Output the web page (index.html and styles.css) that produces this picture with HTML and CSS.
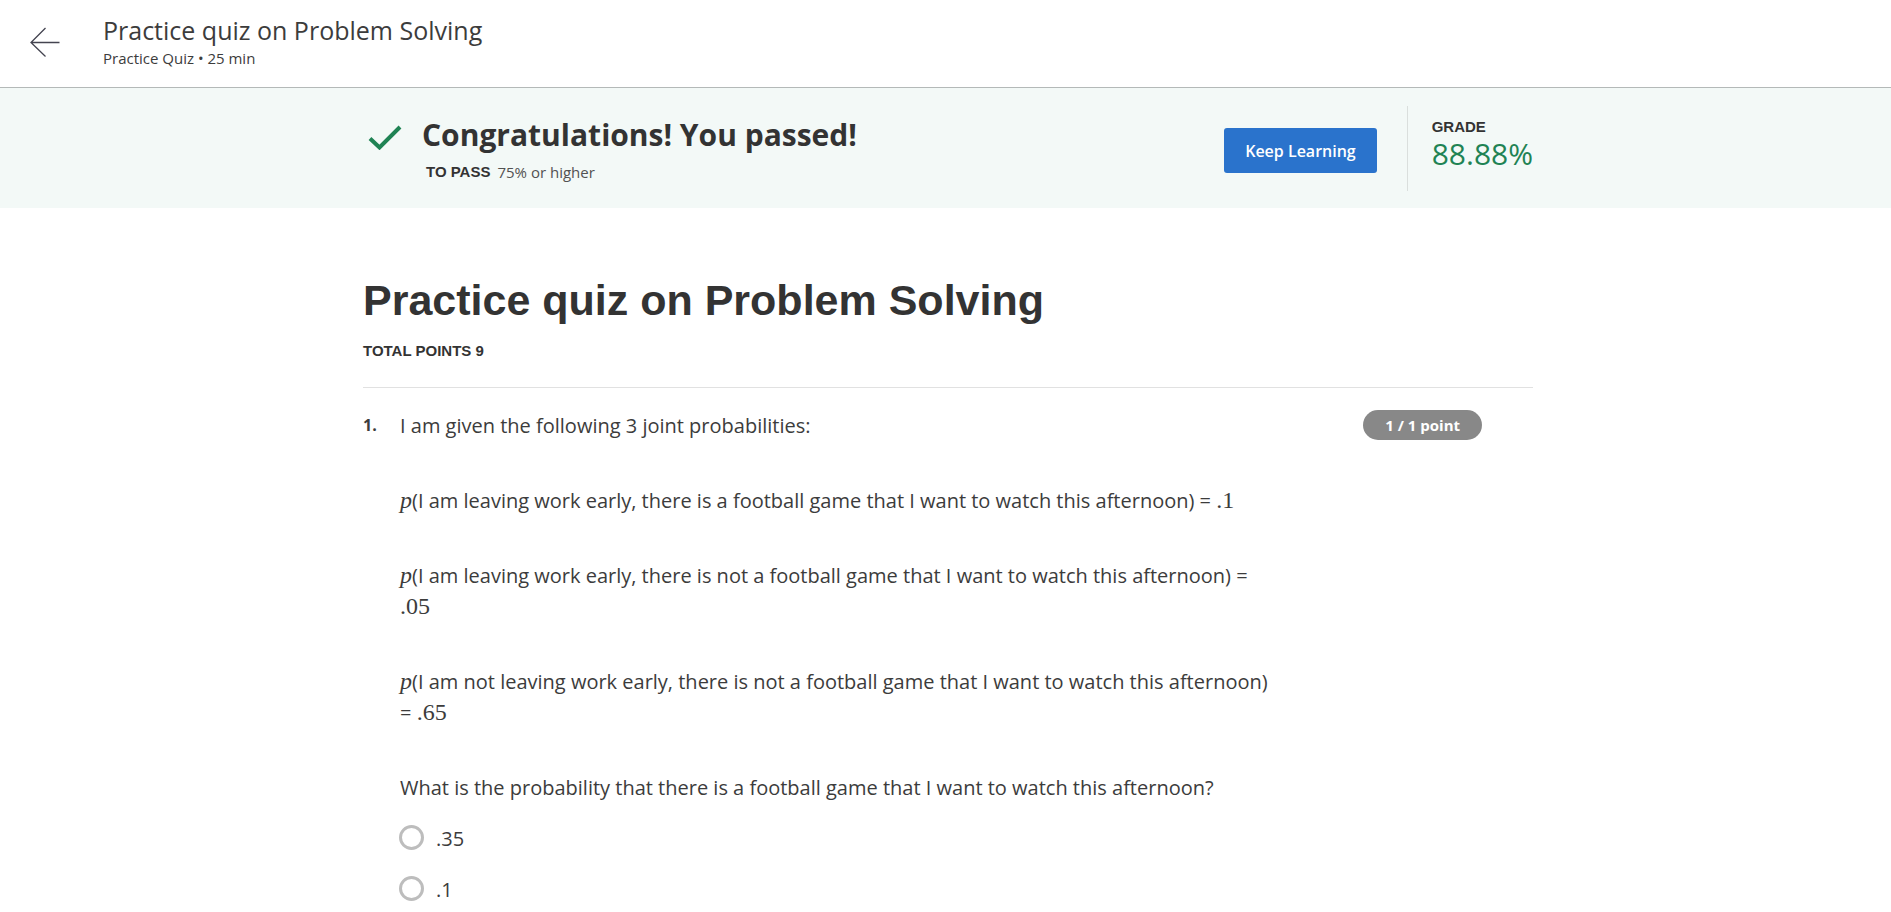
FILE: index.html
```html
<!DOCTYPE html>
<html lang="en">
<head>
<meta charset="utf-8">
<meta name="viewport" content="width=device-width, initial-scale=1">
<title>Practice quiz on Problem Solving</title>
<link rel="stylesheet" href="styles.css">
</head>
<body>
<header class="topbar">
  <button class="back" type="button" aria-label="Back">
    <svg class="back-icon" viewBox="0 0 30 30" aria-hidden="true"><path d="M29.5 15.500H1M15.500 1 1 15.500 15.500 29.500"/></svg>
  </button>
  <div>
    <p class="topbar-title">Practice quiz on Problem Solving</p>
    <p class="topbar-sub">Practice Quiz • 25 min</p>
  </div>
</header>
<section class="banner">
  <div class="container banner-inner">
    <svg class="check" viewBox="0 0 34 26" aria-hidden="true"><path d="M2 14.500 11.500 23.500 32 3"/></svg>
    <div class="result">
      <h2 class="result-title">Congratulations! You passed!</h2>
      <p class="result-pass"><strong class="caps">TO PASS</strong><span>75% or higher</span></p>
    </div>
    <button class="keep" type="button">Keep Learning</button>
    <div class="grade">
      <p class="caps">GRADE</p>
      <p class="grade-value">88.88%</p>
    </div>
  </div>
</section>
<main class="container">
  <h1 class="title">Practice quiz on Problem Solving</h1>
  <p class="caps points">TOTAL POINTS 9</p>
  <section class="question">
    <span class="number">1.</span>
    <div class="body">
      <div class="prompt">
        <p>I am given the following 3 joint probabilities:</p>
        <p><i class="math">p</i>(I am leaving work early, there is a football game that I want to watch this afternoon) = <span class="math">.1</span></p>
        <p><i class="math">p</i>(I am leaving work early, there is not a football game that I want to watch this afternoon) = <span class="math">.05</span></p>
        <p><i class="math">p</i>(I am not leaving work early, there is not a football game that I want to watch this afternoon) = <span class="math">.65</span></p>
        <p>What is the probability that there is a football game that I want to watch this afternoon?</p>
      </div>
      <div class="options">
        <label class="option"><input class="radio" type="radio" name="q1"><span>.35</span></label>
        <label class="option"><input class="radio" type="radio" name="q1"><span>.1</span></label>
      </div>
    </div>
    <span class="badge">1 / 1 point</span>
  </section>
</main>
</body>
</html>
```
FILE: styles.css
```css
* { box-sizing: border-box; }
html { overflow: hidden; }
body {
  margin: 0;
  background: #fff;
  color: #3c3c3c;
  font-family: "Open Sans", sans-serif;
  font-size: 20px;
  line-height: 30px;
}
p, h1, h2 { margin: 0; }

.container {
  width: 100%;
  max-width: 1175px;
  margin: 0 auto;
  padding-left: 5px;
}

.topbar {
  display: flex;
  align-items: center;
  gap: 43px;
  height: 88px;
  padding: 0 30px 4px;
  border-bottom: 1px solid #b4b9b8;
}
.back { display: flex; padding: 0; border: 0; background: none; cursor: pointer; }
.back-icon { width: 30px; height: 30px; fill: none; stroke: #444450; stroke-width: 1.3; }
.topbar-title { font-size: 25px; line-height: 32px; }
.topbar-sub { font-size: 15px; line-height: 24px; }

.banner { background: #f3f9f7; padding: 18px 0 17px; }
.banner-inner { display: flex; align-items: flex-start; }
.check { width: 34px; height: 26px; margin: 18px 20px 0 5px; fill: none; stroke: #1f8354; stroke-width: 4; }
.result { flex: 1; padding-top: 8px; }
.result-title { color: #333; font-size: 30px; font-weight: 700; line-height: 42px; }
.result-pass { display: flex; gap: 7px; padding: 4px 0 0 4px; color: #525252; font-size: 15px; line-height: 24px; }
.caps { color: #333; font-family: "Liberation Sans", Arial, sans-serif; font-size: 15px; font-weight: 700; line-height: 20px; }
.result-pass .caps { line-height: 24px; }
.keep {
  margin: 22px 30px 0 0;
  padding: 0 21px;
  height: 45px;
  border: 0;
  border-radius: 3px;
  background: #2a73cc;
  color: #fff;
  font: 600 16px "Open Sans", sans-serif;
  cursor: pointer;
}
.grade { height: 85px; padding: 11px 0 0 24px; border-left: 1px solid #dadfdd; }
.grade-value { color: #1f8354; font-size: 30px; line-height: 34px; font-weight: 400; }

.title {
  padding-top: 64px;
  color: #333;
  font: 700 43px/56px "Liberation Sans", Arial, sans-serif;
  padding-bottom: 13px;
}
.points { padding-bottom: 26px; border-bottom: 1px solid #e1e1e1; }

.question { display: flex; align-items: flex-start; padding-top: 22px; }
.number { width: 37px; font-size: 16px; font-weight: 700; }
.body { width: 875px; }
.prompt { display: grid; gap: 44px; line-height: 31px; }
.math { font-family: "Liberation Serif", "Times New Roman", serif; font-size: 24px; line-height: 24px; }
.options { display: grid; gap: 21px; padding: 21px 0; }
.option { display: flex; align-items: flex-start; gap: 12px; }
.radio { appearance: none; width: 25px; height: 25px; margin: 1px 0 0 -1px; border: 3px solid #bdbdbd; border-radius: 50%; background: #fff; }
.badge {
  margin-left: auto;
  margin-right: 51px;
  padding: 0 22px;
  border-radius: 15px;
  background: #888;
  color: #fff;
  font-size: 15px;
  font-weight: 700;
  line-height: 30px;
}
```
